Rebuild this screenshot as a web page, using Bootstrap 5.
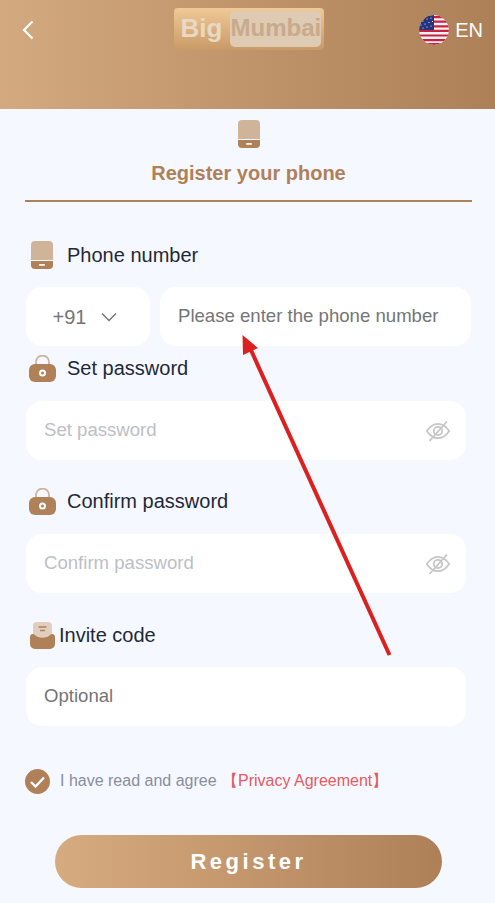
<!DOCTYPE html>
<html lang="en">
<head>
  <meta charset="UTF-8">
  <title>Register</title>
  <link href="https://cdn.jsdelivr.net/npm/bootstrap@5.3.0/dist/css/bootstrap.min.css" rel="stylesheet">
  <style>
    html, body { height: 100%; }
    body { background: #f6f8ff; font-family: "Liberation Sans", Arial, sans-serif; color: #1f2937; position: relative; overflow: hidden; }
    .top-bar { height: 109px; background: linear-gradient(90deg, #d3a97f, #ad8057); padding: 8px 12px 0 22px; color: #fff; }
    .back-btn { width: 12px; height: 20px; margin-top: 12px; }
    .brand-logo { width: 150px; height: 42px; margin-left: 44px; border-radius: 4px; background: linear-gradient(180deg, #efc996, #c99a68); padding: 3px 3px 3px 7px; color: #e9d8c4; font-size: 26px; font-weight: 700; line-height: 34px; }
    .brand-logo .brand-box { flex: 1; background: #dfcab3; border-radius: 5px; color: #c8aa8c; font-size: 24px; text-align: center; line-height: 34px; margin: 0 0 0 8px; height: 36px; }
    .lang-pick { margin-top: 7px; font-size: 20px; gap: 6px; line-height: 28px; }
    .flag-round { width: 30px; height: 30px; border-radius: 50%; display: block; }
    .reg-title { color: #b08058; font-size: 20px; font-weight: 700; line-height: 24px; margin-top: 13px; }
    .reg-head { height: 93px; margin: 0 23px 0 25px; border-bottom: 2px solid #b08058; padding-top: 11px; }
    .field-label { font-size: 20px; line-height: 28px; }
    .field-box { background: #fff; border-radius: 16px; height: 59px; padding: 0 16px 0 18px; font-size: 18.6px; }
    .field-box input { border: 0; outline: 0; background: transparent; width: 100%; padding: 0 0 2px; font-size: 18.6px; }
    .field-box input::placeholder { color: #bcc0c6; }
    .field-box input.dark-hint::placeholder { color: #757575; }
    .code-box { width: 124px; flex: none; color: #757575; justify-content: center; gap: 15px; font-size: 20px; padding: 0 6px 0 0; }
    .phone-row { gap: 10px; }
    .pw-field { margin-right: 5px; }
    .form-wrap { padding: 0 24px 0 26px; }
    .ico-phone { width: 22px; height: 28px; }
    .ico-lock { width: 27px; height: 27px; }
    .ico-invite { width: 25px; height: 27px; }
    .ico-eye { width: 24px; height: 22px; flex: none; }
    .label-phone { margin-top: 39px; margin-bottom: 18px; padding-left: 5px; gap: 14px; }
    .label-set { margin-top: 8px; margin-bottom: 19px; padding-left: 3px; gap: 11px; }
    .label-confirm { margin-top: 27px; margin-bottom: 19px; padding-left: 3px; gap: 11px; }
    .label-invite { margin-top: 28px; margin-bottom: 18px; padding-left: 4px; gap: 4px; }
    .agree-row { margin-top: 42px; margin-left: -1px; gap: 10px; font-size: 16px; color: #888e9f; line-height: 26px; }
    .agree-check { width: 25px; height: 25px; flex: none; }
    .agree-link { color: #e45b5f; margin-left: 1px; }
    .reg-btn { display: block; width: 387px; height: 53px; margin: 41px 0 0 55px; border: 0; border-radius: 27px; background: linear-gradient(90deg, #d7ab80, #ae8058); color: #fff; font-size: 22px; font-weight: 700; letter-spacing: 3.5px; }
    .red-arrow { position: absolute; left: 0; top: 0; pointer-events: none; }
  </style>
</head>
<body>
  <div class="top-bar d-flex justify-content-between align-items-start">
    <svg class="back-btn" viewBox="0 0 12 20"><path d="M10.500 1.500 2 10l8.500 8.500" fill="none" stroke="#fff" stroke-width="2.200"/></svg>
    <div class="brand-logo d-flex">
      <span>Big</span>
      <span class="brand-box">Mumbai</span>
    </div>
    <div class="lang-pick d-flex align-items-center">
      <svg class="flag-round" viewBox="0 0 30 30">
        <defs><clipPath id="flagClip"><circle cx="15" cy="15" r="15"/></clipPath></defs>
        <g clip-path="url(#flagClip)">
          <rect width="30" height="30" fill="#f3f3f6"/>
          <path d="M0 1h30v2.200H0zM0 5.600h30v2.200H0zM0 10.200h30v2.200H0zM0 14.800h30V17H0zM0 19.400h30v2.200H0zM0 24h30v2.200H0zM0 28h30v2H0z" fill="#c9223f"/>
          <rect width="15" height="15" fill="#26337c"/>
          <g fill="#fff">
            <circle cx="4" cy="6" r=".6"/><circle cx="8" cy="4" r=".6"/><circle cx="12" cy="3" r=".6"/>
            <circle cx="2" cy="10" r=".6"/><circle cx="6" cy="9" r=".6"/><circle cx="10" cy="7.500" r=".6"/><circle cx="13.500" cy="6.500" r=".6"/>
            <circle cx="4" cy="13" r=".6"/><circle cx="8" cy="12" r=".6"/><circle cx="12" cy="11" r=".6"/>
          </g>
        </g>
      </svg>
      <span>EN</span>
    </div>
  </div>

  <div class="reg-head text-center">
    <svg class="ico-phone d-block mx-auto" viewBox="0 0 22 28"><use href="#phoneIco"/></svg>
    <div class="reg-title">Register your phone</div>
  </div>

  <form class="form-wrap">
    <label class="field-label d-flex align-items-center label-phone">
      <svg class="ico-phone" viewBox="0 0 22 28">
        <g id="phoneIco">
          <path d="M0 19V4a4 4 0 0 1 4-4h14a4 4 0 0 1 4 4v15z" fill="#d0b49a"/>
          <path d="M0 20h22v4a4 4 0 0 1-4 4H4a4 4 0 0 1-4-4z" fill="#b08058"/>
          <rect x="8" y="23" width="6" height="1.800" rx=".9" fill="#fff"/>
        </g>
      </svg>
      Phone number
    </label>
    <div class="d-flex phone-row">
      <div class="field-box code-box d-flex align-items-center">
        <span>+91</span>
        <svg width="16" height="10" viewBox="0 0 16 10"><path d="M1 1.500 8 8.500l7-7" fill="none" stroke="#757575" stroke-width="1.500"/></svg>
      </div>
      <div class="field-box flex-grow-1 d-flex align-items-center">
        <input class="dark-hint" type="text" placeholder="Please enter the phone number">
      </div>
    </div>

    <label class="field-label d-flex align-items-center label-set">
      <svg class="ico-lock" viewBox="0 0 27 27">
        <path d="M7 12V7a6.500 6.500 0 0 1 13 0v5" fill="none" stroke="#cdb69f" stroke-width="1.800"/>
        <rect x="0" y="9" width="27" height="18" rx="6" fill="#b08058"/>
        <circle cx="13.500" cy="18" r="3.500" fill="#fff"/><circle cx="13.500" cy="18" r="1.500" fill="#b08058"/>
      </svg>
      Set password
    </label>
    <div class="field-box pw-field d-flex align-items-center">
      <input type="password" placeholder="Set password">
      <svg class="ico-eye" viewBox="0 0 24 22"><g fill="none" stroke="#c6c6c6" stroke-width="1.800"><path d="M.8 11C4 6.200 8 3.800 12 3.800s8 2.400 11.200 7.200C20 15.800 16 18.200 12 18.200S4 15.800.8 11z"/><circle cx="12" cy="11" r="4.200"/><path d="M3.500 21 21 1.500"/></g></svg>
    </div>

    <label class="field-label d-flex align-items-center label-confirm">
      <svg class="ico-lock" viewBox="0 0 27 27">
        <path d="M7 12V7a6.500 6.500 0 0 1 13 0v5" fill="none" stroke="#cdb69f" stroke-width="1.800"/>
        <rect x="0" y="9" width="27" height="18" rx="6" fill="#b08058"/>
        <circle cx="13.500" cy="18" r="3.500" fill="#fff"/><circle cx="13.500" cy="18" r="1.500" fill="#b08058"/>
      </svg>
      Confirm password
    </label>
    <div class="field-box pw-field d-flex align-items-center">
      <input type="password" placeholder="Confirm password">
      <svg class="ico-eye" viewBox="0 0 24 22"><g fill="none" stroke="#c6c6c6" stroke-width="1.800"><path d="M.8 11C4 6.200 8 3.800 12 3.800s8 2.400 11.200 7.200C20 15.800 16 18.200 12 18.200S4 15.800.8 11z"/><circle cx="12" cy="11" r="4.200"/><path d="M3.500 21 21 1.500"/></g></svg>
    </div>

    <label class="field-label d-flex align-items-center label-invite">
      <svg class="ico-invite" viewBox="0 0 25 27">
        <rect x="3" y="0" width="19" height="18" rx="4" fill="#e0cfbe"/>
        <path d="M8.500 5h8M10 8.500h5" stroke="#b08058" stroke-width="1.300"/>
        <path d="M0 15c0-3 3-4 5-2 3 3.500 12 3.500 15 0 2-2 5-1 5 2v7a5 5 0 0 1-5 5H5a5 5 0 0 1-5-5z" fill="#b08058"/>
      </svg>
      Invite code
    </label>
    <div class="field-box pw-field d-flex align-items-center">
      <input class="dark-hint" type="text" placeholder="Optional">
    </div>

    <div class="agree-row d-flex align-items-center">
      <svg class="agree-check" viewBox="0 0 25 25"><circle cx="12.500" cy="12.500" r="12.500" fill="#b08058"/><path d="m6 13 4.500 4.500L19 8.500" fill="none" stroke="#fff" stroke-width="2.400"/></svg>
      <span>I have read and agree <span class="agree-link">【Privacy Agreement】</span></span>
    </div>
  </form>

  <button type="button" class="reg-btn">Register</button>

  <svg class="red-arrow" width="495" height="903" viewBox="0 0 495 903">
    <path d="M389.500 655 250 348" stroke="#dc2020" stroke-width="4" fill="none"/>
    <path d="M242.500 335 258 348 243 355z" fill="#dc2020"/>
  </svg>
</body>
</html>
